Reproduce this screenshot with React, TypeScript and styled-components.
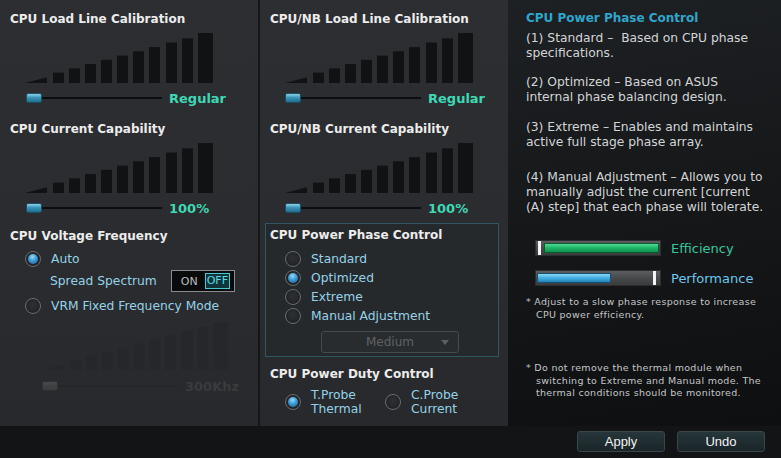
import styled, { createGlobalStyle } from "styled-components";

const GlobalStyle = createGlobalStyle`
  *, *::before, *::after { box-sizing: border-box; }
  html, body { margin: 0; padding: 0; background: #111315; }
  body { font-family: "DejaVu Sans", Verdana, sans-serif; }
`;

const Screen = styled.div`
  width: 781px;
  height: 458px;
  display: grid;
  grid-template-rows: 426px 32px;
  overflow: hidden;
`;

const Main = styled.div`
  display: grid;
  grid-template-columns: 258px 250px 273px;
`;

const Column = styled.div<{ $divider?: boolean }>`
  display: flex;
  flex-direction: column;
  align-items: flex-start;
  padding: 12px 0 0 10px;
  background: linear-gradient(180deg, #2c2e31 0%, #2a2c2f 60%, #28292c 100%);
  border-left: ${(p) => (p.$divider ? "2px solid #151618" : "none")};
`;

const Title = styled.div<{ $mt?: number }>`
  margin-top: ${(p) => p.$mt ?? 0}px;
  font-size: 12px;
  line-height: 14px;
  font-weight: bold;
  color: #ececec;
  white-space: nowrap;
`;

const Stairs = styled.svg<{ $mt: number; $ml: number }>`
  display: block;
  margin-top: ${(p) => p.$mt}px;
  margin-left: ${(p) => p.$ml}px;
`;

const SliderRow = styled.div<{ $mt: number; $ml: number }>`
  display: flex;
  align-items: center;
  height: 14px;
  margin-top: ${(p) => p.$mt}px;
  margin-left: ${(p) => p.$ml}px;
`;

const Thumb = styled.div<{ $dim?: boolean }>`
  width: 16px;
  height: 10px;
  border-radius: 2px;
  border: 1px solid ${(p) => (p.$dim ? "#2e3032" : "#1d4f63")};
  background: ${(p) =>
    p.$dim
      ? "linear-gradient(180deg, #46494b 0%, #393b3d 100%)"
      : "linear-gradient(180deg, #8fd0e6 0%, #3b94b6 45%, #1f6f8d 100%)"};
`;

const Track = styled.div<{ $dim?: boolean }>`
  width: 120px;
  height: 2px;
  background: ${(p) => (p.$dim ? "#242628" : "#0c0d0e")};
`;

const Value = styled.span<{ $dim?: boolean }>`
  margin-left: 7px;
  font-size: 13px;
  font-weight: bold;
  color: ${(p) => (p.$dim ? "#393b3e" : "#3fd8b4")};
`;

const RadioRow = styled.label<{ $mt?: number; $ml?: number }>`
  display: flex;
  align-items: center;
  gap: 10px;
  height: 18px;
  margin-top: ${(p) => p.$mt ?? 0}px;
  margin-left: ${(p) => p.$ml ?? 0}px;
  font-size: 12.3px;
  color: #95d2e8;
  white-space: nowrap;
`;

const Circle = styled.span<{ $on?: boolean }>`
  position: relative;
  flex: none;
  width: 16px;
  height: 16px;
  border-radius: 50%;
  border: 1px solid #6a6d70;
  background: radial-gradient(circle at 50% 40%, #2e3134 0%, #1d1f21 100%);
  box-shadow: inset 0 0 0 1px #232527;
  &::after {
    content: "";
    display: ${(p) => (p.$on ? "block" : "none")};
    position: absolute;
    left: 2px;
    top: 2px;
    width: 10px;
    height: 10px;
    border-radius: 50%;
    background: radial-gradient(circle at 45% 30%, #9ad8f6 0%, #3a9ad6 45%, #1c5f95 100%);
  }
`;

const SpreadRow = styled.div`
  display: flex;
  align-items: center;
  height: 22px;
  margin-top: 2px;
  margin-left: 40px;
  font-size: 12.3px;
  color: #95d2e8;
`;

const Toggle = styled.div`
  display: flex;
  align-items: center;
  width: 64px;
  height: 22px;
  margin-left: 14px;
  padding: 0 4px 0 9px;
  background: #090a0b;
  border: 1px solid #8a8c8e;
  font-size: 11px;
  color: #bdbdbd;
`;

const ToggleOn = styled.span`
  width: 25px;
`;

const ToggleOff = styled.span`
  width: 26px;
  height: 16px;
  line-height: 14px;
  text-align: center;
  border: 1px solid #47c9d2;
  background: #0f3439;
  color: #56dbe4;
`;

const PhaseBox = styled.div`
  width: 234px;
  margin-top: 8px;
  margin-left: -5px;
  padding: 4px 0 3px 4px;
  border: 1px solid #2d5763;
  background: #26292c;
`;

const Options = styled.div`
  display: flex;
  flex-direction: column;
  gap: 1px;
  margin-top: 8px;
  margin-left: 15px;
`;

const Select = styled.div`
  position: relative;
  width: 138px;
  height: 22px;
  margin-top: 6px;
  margin-left: 51px;
  border: 1px solid #464a4d;
  border-radius: 3px;
  background: #292c2f;
  font-size: 12px;
  line-height: 20px;
  text-align: center;
  color: #5e6265;
  &::after {
    content: "";
    position: absolute;
    right: 9px;
    top: 8px;
    border-left: 4px solid transparent;
    border-right: 4px solid transparent;
    border-top: 5px solid #5b5f62;
  }
`;

const DutyRow = styled.div`
  display: flex;
  margin-top: 7px;
  margin-left: 15px;
`;

const DutyOption = styled.label<{ $w?: number }>`
  display: flex;
  align-items: center;
  gap: 10px;
  width: ${(p) => (p.$w ? `${p.$w}px` : "auto")};
  font-size: 12.3px;
  line-height: 14px;
  color: #95d2e8;
`;

const InfoColumn = styled.div`
  display: flex;
  flex-direction: column;
  align-items: flex-start;
  padding: 11px 0 0 18px;
  background: linear-gradient(170deg, #1e2124 0%, #16181a 45%, #0e0f11 100%);
`;

const InfoTitle = styled.div`
  font-size: 12px;
  line-height: 14px;
  font-weight: bold;
  color: #2fa6cc;
`;

const Para = styled.div<{ $mt: number }>`
  margin-top: ${(p) => p.$mt}px;
  font-size: 12.3px;
  line-height: 14.7px;
  color: #d2d4d6;
  white-space: nowrap;
`;

const Line = styled.div``;

const MeterRow = styled.div<{ $mt: number }>`
  display: flex;
  align-items: center;
  margin-top: ${(p) => p.$mt}px;
  margin-left: 9px;
`;

const Meter = styled.div`
  position: relative;
  width: 126px;
  height: 16px;
  border: 1px solid #2b2d2f;
  background: linear-gradient(180deg, #5c5e60 0%, #48494b 50%, #3a3b3d 100%);
`;

const Fill = styled.div<{ $kind: "green" | "blue" }>`
  position: absolute;
  top: 2px;
  bottom: 2px;
  border: 1px solid ${(p) => (p.$kind === "green" ? "#0b5a34" : "#14506f")};
  background: ${(p) =>
    p.$kind === "green"
      ? "linear-gradient(180deg, #4fdc93 0%, #1fb467 50%, #129150 100%)"
      : "linear-gradient(180deg, #8ad6f6 0%, #45ade0 50%, #2383b8 100%)"};
`;

const Marker = styled.div`
  position: absolute;
  top: 0;
  bottom: 0;
  width: 3px;
  background: #f4f4f4;
`;

const MeterLabel = styled.span<{ $color: string }>`
  margin-left: 10px;
  font-size: 13px;
  color: ${(p) => p.$color};
`;

const Note = styled.div<{ $mt: number }>`
  margin-top: ${(p) => p.$mt}px;
  padding-left: 10px;
  text-indent: -10px;
  font-size: 9.5px;
  line-height: 12.5px;
  letter-spacing: 0.3px;
  color: #c4c6c8;
  white-space: nowrap;
`;

const Footer = styled.div`
  display: flex;
  justify-content: flex-end;
  align-items: flex-start;
  gap: 12px;
  padding: 5px 16px 0 0;
  background: #121416;
`;

const Button = styled.button`
  width: 88px;
  height: 21px;
  padding: 0;
  border: 1px solid #3a4649;
  border-radius: 3px;
  background: linear-gradient(180deg, #26363a 0%, #1a2528 100%);
  font-family: "Liberation Sans", Arial, sans-serif;
  font-size: 13px;
  color: #f2f2f2;
`;

function Staircase({ w, h, mt, ml, dim }: { w: number; h: number; mt: number; ml: number; dim?: boolean }) {
  const bars = [28, 44, 60, 76, 92, 108, 124, 141, 157, 173];
  const k = h / 188;
  const fill = dim ? "#25272a" : "#111213";
  return (
    <Stairs width={w} height={h} viewBox={`0 0 189 ${h}`} preserveAspectRatio="none" $mt={mt} $ml={ml}>
      <polygon points={`0,${h} 22,${h} 22,${h - 22 * k}`} fill={fill} />
      {bars.map((x, i) => {
        const bw = i === bars.length - 1 ? 15 : 11;
        const top = h - (x + bw) * k;
        return <rect key={x} x={x} y={top} width={bw} height={h - top} fill={fill} />;
      })}
    </Stairs>
  );
}

function Slider({ mt, value, dim, ml = 16 }: { mt: number; value: string; dim?: boolean; ml?: number }) {
  return (
    <SliderRow $mt={mt} $ml={ml}>
      <Thumb $dim={dim} />
      <Track $dim={dim} />
      <Value $dim={dim}>{value}</Value>
    </SliderRow>
  );
}

export default function App() {
  return (
    <>
      <GlobalStyle />
      <Screen>
        <Main>
          <Column>
            <Title>CPU Load Line Calibration</Title>
            <Staircase w={189} h={50} mt={7} ml={15} />
            <Slider mt={8} value="Regular" />
            <Title $mt={17}>CPU Current Capability</Title>
            <Staircase w={189} h={50} mt={7} ml={15} />
            <Slider mt={8} value="100%" />
            <Title $mt={14}>CPU Voltage Frequency</Title>
            <RadioRow $mt={7} $ml={15}>
              <Circle $on />
              Auto
            </RadioRow>
            <SpreadRow>
              Spread Spectrum
              <Toggle>
                <ToggleOn>ON</ToggleOn>
                <ToggleOff>OFF</ToggleOff>
              </Toggle>
            </SpreadRow>
            <RadioRow $mt={5} $ml={15}>
              <Circle />
              VRM Fixed Frequency Mode
            </RadioRow>
            <Staircase w={186} h={48} mt={7} ml={33} dim />
            <Slider mt={9} ml={32} value="300Khz" dim />
          </Column>

          <Column $divider>
            <Title>CPU/NB Load Line Calibration</Title>
            <Staircase w={189} h={50} mt={7} ml={15} />
            <Slider mt={8} ml={15} value="Regular" />
            <Title $mt={17}>CPU/NB Current Capability</Title>
            <Staircase w={189} h={50} mt={7} ml={15} />
            <Slider mt={8} ml={15} value="100%" />
            <PhaseBox>
              <Title>CPU Power Phase Control</Title>
              <Options>
                <RadioRow>
                  <Circle />
                  Standard
                </RadioRow>
                <RadioRow>
                  <Circle $on />
                  Optimized
                </RadioRow>
                <RadioRow>
                  <Circle />
                  Extreme
                </RadioRow>
                <RadioRow>
                  <Circle />
                  Manual Adjustment
                </RadioRow>
              </Options>
              <Select>Medium</Select>
            </PhaseBox>
            <Title $mt={10}>CPU Power Duty Control</Title>
            <DutyRow>
              <DutyOption $w={100}>
                <Circle $on />
                <span>
                  T.Probe
                  <br />
                  Thermal
                </span>
              </DutyOption>
              <DutyOption>
                <Circle />
                <span>
                  C.Probe
                  <br />
                  Current
                </span>
              </DutyOption>
            </DutyRow>
          </Column>

          <InfoColumn>
            <InfoTitle>CPU Power Phase Control</InfoTitle>
            <Para $mt={6}>
              <Line>(1) Standard –&nbsp; Based on CPU phase</Line>
              <Line>specifications.</Line>
            </Para>
            <Para $mt={15}>
              <Line>(2) Optimized – Based on ASUS</Line>
              <Line>internal phase balancing design.</Line>
            </Para>
            <Para $mt={15}>
              <Line>(3) Extreme – Enables and maintains</Line>
              <Line>active full stage phase array.</Line>
            </Para>
            <Para $mt={21}>
              <Line>(4) Manual Adjustment – Allows you to</Line>
              <Line>manually adjust the current [current</Line>
              <Line>(A) step] that each phase will tolerate.</Line>
            </Para>
            <MeterRow $mt={26}>
              <Meter>
                <Marker style={{ left: 2 }} />
                <Fill $kind="green" style={{ left: 8, right: 1 }} />
              </Meter>
              <MeterLabel $color="#35c79c">Efficiency</MeterLabel>
            </MeterRow>
            <MeterRow $mt={14}>
              <Meter>
                <Fill $kind="blue" style={{ left: 1, right: 49 }} />
                <Marker style={{ left: 117 }} />
              </Meter>
              <MeterLabel $color="#6cc8ec">Performance</MeterLabel>
            </MeterRow>
            <Note $mt={10}>
              * Adjust to a slow phase response to increase
              <br />
              CPU power efficiency.
            </Note>
            <Note $mt={41}>
              * Do not remove the thermal module when
              <br />
              switching to Extreme and Manual mode. The
              <br />
              thermal conditions should be monitored.
            </Note>
          </InfoColumn>
        </Main>
        <Footer>
          <Button>Apply</Button>
          <Button>Undo</Button>
        </Footer>
      </Screen>
    </>
  );
}
